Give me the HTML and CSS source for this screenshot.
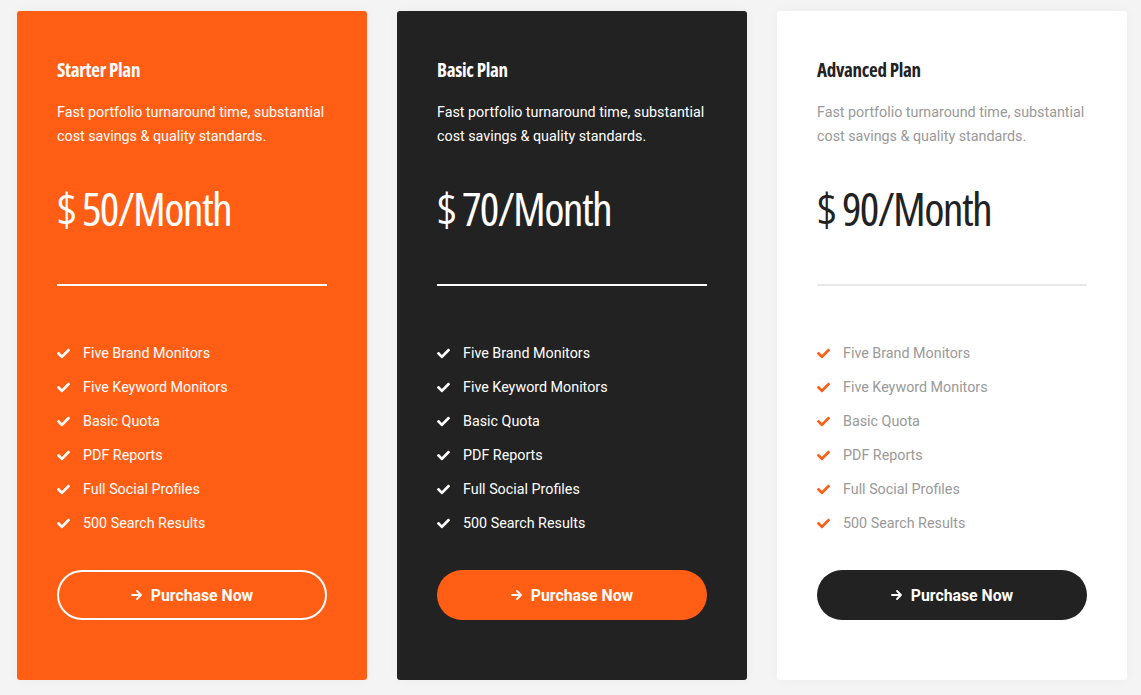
FILE: index.html
```html
<!DOCTYPE html>
<html>
<head>
<meta charset="utf-8">
<link rel="stylesheet" href="styles.css">
</head>
<body>
<div class="plans">
  <div class="card card-orange">
    <h3 class="title">Starter Plan</h3>
    <p class="desc">Fast portfolio turnaround time, substantial cost savings &amp; quality standards.</p>
    <div class="price">$ 50/Month</div>
    <hr class="divider">
    <ul class="features">
      <li><svg class="check" viewBox="0 0 512 512"><path d="M173.9 439.4L7.5 273c-10-10-10-26.2 0-36.2l36.2-36.2c10-10 26.2-10 36.2 0L192 312.7 432.1 72.6c10-10 26.2-10 36.2 0l36.2 36.2c10 10 10 26.2 0 36.2L210.1 439.4c-10 10-26.2 10-36.2 0z"/></svg>Five Brand Monitors</li>
      <li><svg class="check" viewBox="0 0 512 512"><path d="M173.9 439.4L7.5 273c-10-10-10-26.2 0-36.2l36.2-36.2c10-10 26.2-10 36.2 0L192 312.7 432.1 72.6c10-10 26.2-10 36.2 0l36.2 36.2c10 10 10 26.2 0 36.2L210.1 439.4c-10 10-26.2 10-36.2 0z"/></svg>Five Keyword Monitors</li>
      <li><svg class="check" viewBox="0 0 512 512"><path d="M173.9 439.4L7.5 273c-10-10-10-26.2 0-36.2l36.2-36.2c10-10 26.2-10 36.2 0L192 312.7 432.1 72.6c10-10 26.2-10 36.2 0l36.2 36.2c10 10 10 26.2 0 36.2L210.1 439.4c-10 10-26.2 10-36.2 0z"/></svg>Basic Quota</li>
      <li><svg class="check" viewBox="0 0 512 512"><path d="M173.9 439.4L7.5 273c-10-10-10-26.2 0-36.2l36.2-36.2c10-10 26.2-10 36.2 0L192 312.7 432.1 72.6c10-10 26.2-10 36.2 0l36.2 36.2c10 10 10 26.2 0 36.2L210.1 439.4c-10 10-26.2 10-36.2 0z"/></svg>PDF Reports</li>
      <li><svg class="check" viewBox="0 0 512 512"><path d="M173.9 439.4L7.5 273c-10-10-10-26.2 0-36.2l36.2-36.2c10-10 26.2-10 36.2 0L192 312.7 432.1 72.6c10-10 26.2-10 36.2 0l36.2 36.2c10 10 10 26.2 0 36.2L210.1 439.4c-10 10-26.2 10-36.2 0z"/></svg>Full Social Profiles</li>
      <li><svg class="check" viewBox="0 0 512 512"><path d="M173.9 439.4L7.5 273c-10-10-10-26.2 0-36.2l36.2-36.2c10-10 26.2-10 36.2 0L192 312.7 432.1 72.6c10-10 26.2-10 36.2 0l36.2 36.2c10 10 10 26.2 0 36.2L210.1 439.4c-10 10-26.2 10-36.2 0z"/></svg>500 Search Results</li>
    </ul>
    <a class="btn btn-outline" href="#"><svg class="arrow" viewBox="0 0 12 12"><path d="M1 6h9M6 2l4 4-4 4" fill="none" stroke="currentColor" stroke-width="1.8" stroke-linecap="round" stroke-linejoin="round"/></svg>Purchase Now</a>
  </div>

  <div class="card card-dark">
    <h3 class="title">Basic Plan</h3>
    <p class="desc">Fast portfolio turnaround time, substantial cost savings &amp; quality standards.</p>
    <div class="price">$ 70/Month</div>
    <hr class="divider">
    <ul class="features">
      <li><svg class="check" viewBox="0 0 512 512"><path d="M173.9 439.4L7.5 273c-10-10-10-26.2 0-36.2l36.2-36.2c10-10 26.2-10 36.2 0L192 312.7 432.1 72.6c10-10 26.2-10 36.2 0l36.2 36.2c10 10 10 26.2 0 36.2L210.1 439.4c-10 10-26.2 10-36.2 0z"/></svg>Five Brand Monitors</li>
      <li><svg class="check" viewBox="0 0 512 512"><path d="M173.9 439.4L7.5 273c-10-10-10-26.2 0-36.2l36.2-36.2c10-10 26.2-10 36.2 0L192 312.7 432.1 72.6c10-10 26.2-10 36.2 0l36.2 36.2c10 10 10 26.2 0 36.2L210.1 439.4c-10 10-26.2 10-36.2 0z"/></svg>Five Keyword Monitors</li>
      <li><svg class="check" viewBox="0 0 512 512"><path d="M173.9 439.4L7.5 273c-10-10-10-26.2 0-36.2l36.2-36.2c10-10 26.2-10 36.2 0L192 312.7 432.1 72.6c10-10 26.2-10 36.2 0l36.2 36.2c10 10 10 26.2 0 36.2L210.1 439.4c-10 10-26.2 10-36.2 0z"/></svg>Basic Quota</li>
      <li><svg class="check" viewBox="0 0 512 512"><path d="M173.9 439.4L7.5 273c-10-10-10-26.2 0-36.2l36.2-36.2c10-10 26.2-10 36.2 0L192 312.7 432.1 72.6c10-10 26.2-10 36.2 0l36.2 36.2c10 10 10 26.2 0 36.2L210.1 439.4c-10 10-26.2 10-36.2 0z"/></svg>PDF Reports</li>
      <li><svg class="check" viewBox="0 0 512 512"><path d="M173.9 439.4L7.5 273c-10-10-10-26.2 0-36.2l36.2-36.2c10-10 26.2-10 36.2 0L192 312.7 432.1 72.6c10-10 26.2-10 36.2 0l36.2 36.2c10 10 10 26.2 0 36.2L210.1 439.4c-10 10-26.2 10-36.2 0z"/></svg>Full Social Profiles</li>
      <li><svg class="check" viewBox="0 0 512 512"><path d="M173.9 439.4L7.5 273c-10-10-10-26.2 0-36.2l36.2-36.2c10-10 26.2-10 36.2 0L192 312.7 432.1 72.6c10-10 26.2-10 36.2 0l36.2 36.2c10 10 10 26.2 0 36.2L210.1 439.4c-10 10-26.2 10-36.2 0z"/></svg>500 Search Results</li>
    </ul>
    <a class="btn btn-orange" href="#"><svg class="arrow" viewBox="0 0 12 12"><path d="M1 6h9M6 2l4 4-4 4" fill="none" stroke="currentColor" stroke-width="1.8" stroke-linecap="round" stroke-linejoin="round"/></svg>Purchase Now</a>
  </div>

  <div class="card card-light">
    <h3 class="title">Advanced Plan</h3>
    <p class="desc">Fast portfolio turnaround time, substantial cost savings &amp; quality standards.</p>
    <div class="price">$ 90/Month</div>
    <hr class="divider">
    <ul class="features">
      <li><svg class="check" viewBox="0 0 512 512"><path d="M173.9 439.4L7.5 273c-10-10-10-26.2 0-36.2l36.2-36.2c10-10 26.2-10 36.2 0L192 312.7 432.1 72.6c10-10 26.2-10 36.2 0l36.2 36.2c10 10 10 26.2 0 36.2L210.1 439.4c-10 10-26.2 10-36.2 0z"/></svg>Five Brand Monitors</li>
      <li><svg class="check" viewBox="0 0 512 512"><path d="M173.9 439.4L7.5 273c-10-10-10-26.2 0-36.2l36.2-36.2c10-10 26.2-10 36.2 0L192 312.7 432.1 72.6c10-10 26.2-10 36.2 0l36.2 36.2c10 10 10 26.2 0 36.2L210.1 439.4c-10 10-26.2 10-36.2 0z"/></svg>Five Keyword Monitors</li>
      <li><svg class="check" viewBox="0 0 512 512"><path d="M173.9 439.4L7.5 273c-10-10-10-26.2 0-36.2l36.2-36.2c10-10 26.2-10 36.2 0L192 312.7 432.1 72.6c10-10 26.2-10 36.2 0l36.2 36.2c10 10 10 26.2 0 36.2L210.1 439.4c-10 10-26.2 10-36.2 0z"/></svg>Basic Quota</li>
      <li><svg class="check" viewBox="0 0 512 512"><path d="M173.9 439.4L7.5 273c-10-10-10-26.2 0-36.2l36.2-36.2c10-10 26.2-10 36.2 0L192 312.7 432.1 72.6c10-10 26.2-10 36.2 0l36.2 36.2c10 10 10 26.2 0 36.2L210.1 439.4c-10 10-26.2 10-36.2 0z"/></svg>PDF Reports</li>
      <li><svg class="check" viewBox="0 0 512 512"><path d="M173.9 439.4L7.5 273c-10-10-10-26.2 0-36.2l36.2-36.2c10-10 26.2-10 36.2 0L192 312.7 432.1 72.6c10-10 26.2-10 36.2 0l36.2 36.2c10 10 10 26.2 0 36.2L210.1 439.4c-10 10-26.2 10-36.2 0z"/></svg>Full Social Profiles</li>
      <li><svg class="check" viewBox="0 0 512 512"><path d="M173.9 439.4L7.5 273c-10-10-10-26.2 0-36.2l36.2-36.2c10-10 26.2-10 36.2 0L192 312.7 432.1 72.6c10-10 26.2-10 36.2 0l36.2 36.2c10 10 10 26.2 0 36.2L210.1 439.4c-10 10-26.2 10-36.2 0z"/></svg>500 Search Results</li>
    </ul>
    <a class="btn btn-dark" href="#"><svg class="arrow" viewBox="0 0 12 12"><path d="M1 6h9M6 2l4 4-4 4" fill="none" stroke="currentColor" stroke-width="1.8" stroke-linecap="round" stroke-linejoin="round"/></svg>Purchase Now</a>
  </div>
</div>
</body>
</html>
```

FILE: styles.css
```css
* { box-sizing: border-box; }
html, body { margin: 0; padding: 0; }
body {
  background: #f4f4f4;
  font-family: Roboto, "Liberation Sans", sans-serif;
  width: 1141px;
  height: 695px;
  overflow: hidden;
}
.plans {
  display: flex;
  gap: 30px;
  padding: 11px 0 0 17px;
}
.card {
  width: 350px;
  height: 669px;
  border-radius: 3px;
  padding: 45px 40px 0 40px;
  box-shadow: 0 0 12px rgba(0,0,0,0.04);
}
.card-orange { background: #ff5e14; color: #fff; }
.card-dark { background: #222222; color: #fff; }
.card-light { background: #ffffff; color: #222; }

.title {
  margin: 0;
  font-family: "Open Sans", sans-serif;
  font-stretch: 75%;
  font-weight: 700;
  font-size: 19px;
  line-height: 28px;
  letter-spacing: -0.3px;
}
.desc {
  margin: 16px 0 0 0;
  font-size: 14.3px;
  line-height: 24px;
}
.card-light .desc { color: #999; }
.price {
  margin-top: 30px;
  font-family: "Open Sans", sans-serif;
  font-stretch: 75%;
  font-weight: 500;
  font-size: 46px;
  line-height: 60px;
  letter-spacing: -1.6px;
}
.divider {
  margin: 46px 0 0 0;
  border: 0;
  height: 2px;
  background: #fff;
}
.card-light .divider { background: #e8e8e8; }
.features {
  list-style: none;
  margin: 50px 0 0 0;
  padding: 0;
}
.features li {
  display: flex;
  align-items: center;
  height: 34px;
  font-size: 14.3px;
}
.card-light .features li { color: #999; }
.check {
  width: 13px;
  height: 13px;
  margin-right: 13px;
  fill: #fff;
}
.card-light .check { fill: #ff5e14; }
.btn {
  margin-top: 30px;
  display: flex;
  align-items: center;
  justify-content: center;
  height: 50px;
  border-radius: 25px;
  font-size: 15.8px;
  font-weight: 700;
  text-decoration: none;
  color: #fff;
}
.btn-outline { border: 2px solid #fff; }
.btn-orange { background: #ff5e14; }
.btn-dark { background: #222; }
.arrow {
  width: 12px;
  height: 12px;
  margin-right: 8px;
}
```
